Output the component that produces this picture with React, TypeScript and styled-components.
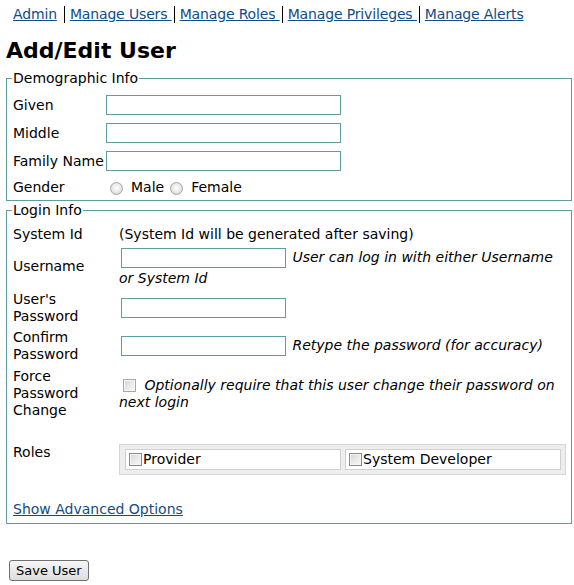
import React from "react";
import styled, { createGlobalStyle } from "styled-components";

const GlobalStyle = createGlobalStyle`
  body {
    margin: 0;
    background: #ffffff;
    color: #000000;
    font-family: "DejaVu Sans", Verdana, sans-serif;
    font-size: 14px;
    line-height: 17px;
  }
`;

const Page = styled.div`
  padding: 6px 3px 0 6px;
`;

const Nav = styled.nav`
  display: flex;
  align-items: center;
  padding-left: 7px;
  height: 17px;
  letter-spacing: -0.15px;
`;

const NavLink = styled.a`
  color: #114c86;
  text-decoration: underline;
  white-space: pre;
  cursor: pointer;
`;

const Sep = styled.span`
  display: inline-block;
  width: 1px;
  height: 17px;
  background: #000000;
  margin: 0 5px 0 ${(p: { $left?: number }) => p.$left ?? 2}px;
`;

const Title = styled.h1`
  font-size: 22px;
  line-height: 26px;
  font-weight: bold;
  margin: 15px 0 6px 0;
`;

const Fieldset = styled.fieldset<{ $pad: string; $mt?: number }>`
  box-sizing: border-box;
  width: 566px;
  margin: ${(p) => p.$mt ?? 0}px 0 0 0;
  padding: ${(p) => p.$pad};
  border: 1px solid #5f9ea0;
`;

const Legend = styled.legend`
  padding: 0 1px;
  margin-left: -1px;
`;

const Row = styled.div<{ $label: number; $mt?: number; $top?: boolean }>`
  display: flex;
  align-items: ${(p) => (p.$top ? "flex-start" : "center")};
  margin-top: ${(p) => p.$mt ?? 0}px;
  & > label {
    flex: 0 0 ${(p) => p.$label}px;
  }
`;

const Label = styled.label`
  display: block;
`;

const Value = styled.div`
  flex: 1;
  min-width: 0;
`;

const TextInput = styled.input<{ $w: number; $m?: string }>`
  box-sizing: border-box;
  width: ${(p) => p.$w}px;
  height: 20px;
  margin: ${(p) => p.$m ?? "0"};
  padding: 0 2px;
  border: 1px solid #5f9ea0;
  border-radius: 0;
  font: inherit;
  vertical-align: middle;
  outline: none;
`;

const Hint = styled.em`
  font-style: oblique;
`;

const Radio = styled.input`
  appearance: none;
  box-sizing: border-box;
  width: 13px;
  height: 13px;
  margin: 0 8px 0 ${(p: { $ml: number }) => p.$ml}px;
  border: 1px solid #a7a7a7;
  border-radius: 50%;
  background: radial-gradient(circle at 50% 45%, #ffffff 0%, #ececec 45%, #c9c9c9 100%);
  vertical-align: middle;
`;

const Check = styled.input<{ $light?: boolean; $mr?: number; $ml?: number }>`
  appearance: none;
  box-sizing: border-box;
  width: 13px;
  height: 13px;
  margin: 0 ${(p) => p.$mr ?? 1}px 0 ${(p) => p.$ml ?? 0}px;
  border: 1px solid ${(p) => (p.$light ? "#a8a8a8" : "#8a8a8a")};
  border-radius: 0;
  background: linear-gradient(135deg, #d4d4d4 0%, #ececec 60%, #f8f8f8 100%);
  box-shadow: inset 0 0 0 1px #f4f4f4;
  vertical-align: -2px;
`;

const RolesBox = styled.div`
  display: grid;
  grid-template-columns: 1fr 1fr;
  gap: 4px;
  padding: 4px 4px 4px 5px;
  background: #eeeeee;
  border: 1px solid #d6d6d6;
`;

const RoleCell = styled.label`
  display: flex;
  align-items: center;
  height: 21px;
  box-sizing: border-box;
  padding-left: 3px;
  background: #ffffff;
  border: 1px solid #d0d0d0;
`;

const Advanced = styled.a`
  display: block;
  margin-top: 26px;
  color: #114c86;
  text-decoration: underline;
  cursor: pointer;
`;

const SaveButton = styled.button`
  margin: 36px 0 0 3px;
  height: 21px;
  padding: 0 6px;
  font-family: "DejaVu Sans", Verdana, sans-serif;
  font-size: 13px;
  color: #000000;
  background: linear-gradient(#f6f6f6, #dddddd);
  border: 1px solid #707070;
  border-radius: 3px;
`;

const navItems = ["Manage Users ", "Manage Roles ", "Manage Privileges ", "Manage Alerts"];

export default function App() {
  return (
    <Page>
      <GlobalStyle />
      <Nav>
        <NavLink>Admin</NavLink>
        {navItems.map((item, i) => (
          <React.Fragment key={item}>
            <Sep $left={i === 0 ? 7 : 2} />
            <NavLink>{item}</NavLink>
          </React.Fragment>
        ))}
      </Nav>
      <Title>Add/Edit User</Title>

      <Fieldset $pad="8px 5px 4px 6px">
        <Legend>Demographic Info</Legend>
        <Row $label={93}>
          <Label>Given</Label>
          <TextInput $w={235} />
        </Row>
        <Row $label={93} $mt={8}>
          <Label>Middle</Label>
          <TextInput $w={235} />
        </Row>
        <Row $label={93} $mt={8}>
          <Label>Family Name</Label>
          <TextInput $w={235} />
        </Row>
        <Row $label={93} $mt={8}>
          <Label>Gender</Label>
          <Value>
            <Radio type="radio" name="gender" $ml={4} />
            Male
            <Radio type="radio" name="gender" $ml={6} />
            Female
          </Value>
        </Row>
      </Fieldset>

      <Fieldset $pad="7px 5px 5px 6px" $mt={1}>
        <Legend>Login Info</Legend>
        <Row $label={106}>
          <Label>System Id</Label>
          <Value>(System Id will be generated after saving)</Value>
        </Row>
        <Row $label={106} $mt={3}>
          <Label>Username</Label>
          <Value>
            <TextInput $w={165} $m="2px" /> <Hint>User can log in with either Username or System Id</Hint>
          </Value>
        </Row>
        <Row $label={106} $mt={4}>
          <Label>
            User's
            <br />
            Password
          </Label>
          <Value>
            <TextInput type="password" $w={165} $m="0 2px" />
          </Value>
        </Row>
        <Row $label={106} $mt={4}>
          <Label>
            Confirm
            <br />
            Password
          </Label>
          <Value>
            <TextInput type="password" $w={165} $m="0 2px" /> <Hint>Retype the password (for accuracy)</Hint>
          </Value>
        </Row>
        <Row $label={106} $mt={5}>
          <Label>
            Force
            <br />
            Password
            <br />
            Change
          </Label>
          <Value>
            <Check type="checkbox" $light $ml={4} $mr={4} /> <Hint>Optionally require that this user change their password on next login</Hint>
          </Value>
        </Row>
        <Row $label={106} $mt={25} $top>
          <Label>Roles</Label>
          <Value>
            <RolesBox>
              <RoleCell>
                <Check type="checkbox" />
                Provider
              </RoleCell>
              <RoleCell>
                <Check type="checkbox" />
                System Developer
              </RoleCell>
            </RolesBox>
          </Value>
        </Row>
        <Advanced>Show Advanced Options</Advanced>
      </Fieldset>

      <SaveButton>Save User</SaveButton>
    </Page>
  );
}
